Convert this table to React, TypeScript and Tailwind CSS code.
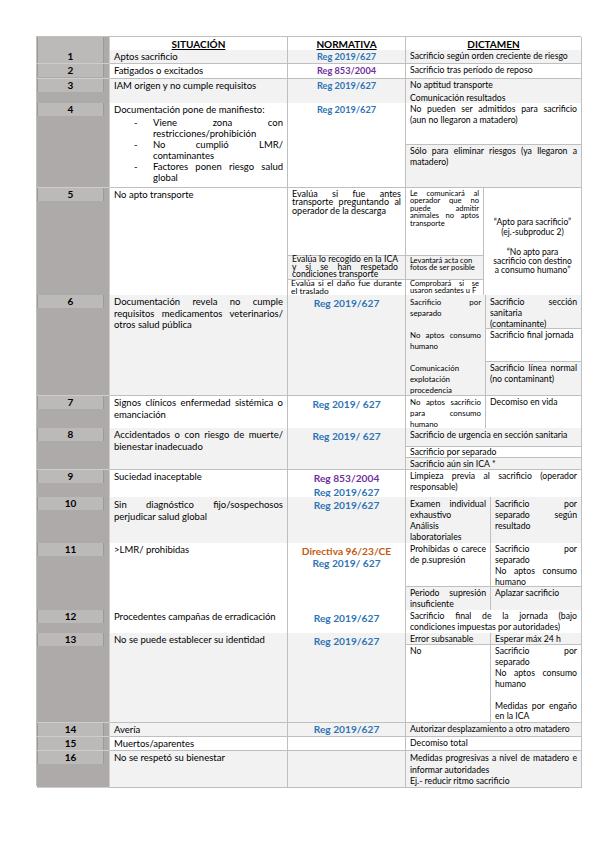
const B = 'border-b border-r border-[#bfbfbf]';
const GRAY = 'bg-[#f2f2f2]';
const WHITE = 'bg-white';
const ROW = 'grid grid-cols-[73px_178px_118px_176px]';
const HEAD = 'pt-[1px] text-center text-[10px] font-bold leading-[12px] underline underline-offset-[1px]';
const SIT = 'px-[4px] pt-[1px] text-[9.5px] leading-[11.5px] text-justify';
const DIC = 'px-[4px] pt-[1px] text-[8.7px] leading-[10.9px] text-justify';
const NARROW = 'px-[4px] pt-[1px] text-[7.9px] leading-[10.8px] text-justify';
const NOR = 'pt-[1px] text-center text-[9.2px] font-bold leading-[11.5px]';
const NOR2 = 'pt-[2px] text-center text-[10.2px] font-bold leading-[12px]';
const SUB = 'px-[3px] text-[8.35px] text-justify';
const TINY = 'px-[4px] text-[7.6px] leading-[7.4px]';
const BLUE = 'text-[#2e74b5]';
const PURPLE = 'text-[#7030a0]';
const ORANGE = 'text-[#c55a11]';
const LINE = 'border-[#bfbfbf]';

function Num({ n }: { n?: string }) {
  return (
    <div className="border-b border-r border-[#cfcccc] bg-[#aeaaaa]">
      <div className="mr-[5px] h-[13px] border-x border-[#9d9999] bg-[#bcb9b9] text-center text-[10px] font-bold leading-[13px]">
        {n}
      </div>
    </div>
  );
}

function Dash({ children }: { children: string }) {
  return (
    <li className="flex">
      <span className="w-[39px] shrink-0 pl-[20px]">-</span>
      <span className="flex-1 text-justify">{children}</span>
    </li>
  );
}

export default function App() {
  return (
    <div className="min-h-[848px] bg-white pl-[36px] pt-[36px] font-['Lato',sans-serif] text-black">
      <div className={`w-[545px] border-l border-t ${LINE}`}>
        {/* header */}
        <div className={`${ROW} h-[13px]`}>
          <Num />
          <div className={`${B} ${WHITE} ${HEAD}`}>SITUACIÓN</div>
          <div className={`${B} ${WHITE} ${HEAD}`}>NORMATIVA</div>
          <div className={`${B} ${WHITE} ${HEAD}`}>DICTAMEN</div>
        </div>

        <div className={`${ROW} h-[14px]`}>
          <Num n="1" />
          <div className={`${B} ${GRAY} ${SIT}`}>Aptos sacrificio</div>
          <div className={`${B} ${GRAY} ${NOR} ${BLUE}`}>Reg 2019/627</div>
          <div className={`${B} ${GRAY} ${DIC}`}>Sacrificio según orden creciente de riesgo</div>
        </div>

        <div className={`${ROW} h-[15px]`}>
          <Num n="2" />
          <div className={`${B} ${WHITE} ${SIT}`}>Fatigados o excitados</div>
          <div className={`${B} ${WHITE} ${NOR} ${PURPLE}`}>Reg 853/2004</div>
          <div className={`${B} ${WHITE} ${DIC}`}>Sacrificio tras período de reposo</div>
        </div>

        <div className={`${ROW} h-[24px]`}>
          <Num n="3" />
          <div className={`${B} ${GRAY} ${SIT}`}>IAM origen y no cumple requisitos</div>
          <div className={`${B} ${GRAY} ${NOR} ${BLUE}`}>Reg 2019/627</div>
          <div className={`${B} ${GRAY} px-[4px] text-[8.7px] leading-[12.5px]`}>
            <p>No aptitud transporte</p>
            <p>Comunicación resultados</p>
          </div>
        </div>

        <div className={`${ROW} h-[85px]`}>
          <Num n="4" />
          <div className={`${B} ${WHITE} px-[4px] pt-[1px] text-[9.5px] leading-[11px]`}>
            <p>Documentación pone de manifiesto:</p>
            <ul className="mt-[2px]">
              <Dash>Viene zona con restricciones/prohibición</Dash>
              <Dash>No cumplió LMR/ contaminantes</Dash>
              <Dash>Factores ponen riesgo salud global</Dash>
            </ul>
          </div>
          <div className={`${B} ${WHITE} ${NOR} ${BLUE}`}>Reg 2019/627</div>
          <div className={`${B} flex flex-col`}>
            <div className={`h-[42px] border-b ${LINE} ${WHITE} ${DIC}`}>
              No pueden ser admitidos para sacrificio (aun no llegaron a matadero)
            </div>
            <div className={`flex-1 ${GRAY} ${DIC}`}>Sólo para eliminar riesgos (ya llegaron a matadero)</div>
          </div>
        </div>

        <div className={`${ROW} h-[107px]`}>
          <Num n="5" />
          <div className={`${B} ${WHITE} ${SIT}`}>No apto transporte</div>
          <div className={`${B} flex flex-col`}>
            <div className={`h-[68px] border-b ${LINE} ${WHITE} px-[4px] pt-[2px] text-[9px] leading-[8.3px] text-justify`}>
              Evalúa si fue antes transporte preguntando al operador de la descarga
            </div>
            <div className={`h-[24px] border-b ${LINE} ${GRAY} pl-[4px] pr-[7px] text-[8.6px] leading-[7.6px] text-justify`}>
              Evalúa lo recogido en la ICA y si se han respetado condiciones transporte
            </div>
            <div className={`flex-1 ${WHITE} ${SUB} leading-[7.6px]`}>Evalúa si el daño fue durante el traslado</div>
          </div>
          <div className={`${B} flex`}>
            <div className={`flex w-[78px] shrink-0 flex-col border-r ${LINE}`}>
              <div className={`h-[68px] border-b ${LINE} ${WHITE} ${TINY} pt-[2px] text-justify`}>
                Le comunicará al operador que no puede admitir animales no aptos transporte
              </div>
              <div className={`h-[24px] border-b ${LINE} ${GRAY} ${TINY} pt-[1px] text-left`}>
                Levantará acta con fotos de ser posible
              </div>
              <div className={`flex-1 ${WHITE} ${TINY} text-justify`}>Comprobará si se usaron sedantes u F</div>
            </div>
            <div className="flex-1 bg-white pt-[29px] text-center text-[8.5px]">
              <p className="leading-[10px]">
                “Apto para sacrificio”
                <br />
                (ej.-subproduc 2)
              </p>
              <p className="mt-[11px] leading-[9px]">
                “No apto para
                <br />
                sacrificio con destino
                <br />a consumo humano”
              </p>
            </div>
          </div>
        </div>

        <div className={`${ROW} h-[101px]`}>
          <Num n="6" />
          <div className={`${B} ${GRAY} ${SIT}`}>
            Documentación revela no cumple requisitos medicamentos veterinarios/ otros salud pública
          </div>
          <div className={`${B} ${GRAY} ${NOR2} ${BLUE}`}>Reg 2019/627</div>
          <div className={`${B} flex`}>
            <div className={`flex w-[80px] shrink-0 flex-col border-r ${LINE} ${GRAY}`}>
              <div className={`h-[34px] ${NARROW} pt-[2px]`}>Sacrificio por separado</div>
              <div className={`h-[33px] ${NARROW}`}>No aptos consumo humano</div>
              <div className={`flex-1 ${NARROW}`}>Comunicación explotación procedencia</div>
            </div>
            <div className="flex flex-1 flex-col">
              <div className={`h-[34px] border-b ${LINE} ${GRAY} ${DIC} pt-[2px]`}>
                Sacrificio sección sanitaria (contaminante)
              </div>
              <div className={`h-[33px] border-b ${LINE} ${WHITE} ${DIC}`}>Sacrificio final jornada</div>
              <div className={`flex-1 ${GRAY} ${DIC}`}>Sacrificio línea normal (no contaminant)</div>
            </div>
          </div>
        </div>

        <div className={`${ROW} h-[32px]`}>
          <Num n="7" />
          <div className={`${B} ${WHITE} ${SIT}`}>Signos clínicos enfermedad sistémica o emanciación</div>
          <div className={`${B} ${WHITE} ${NOR2} ${BLUE}`}>Reg 2019/ 627</div>
          <div className={`${B} ${WHITE} flex`}>
            <div className={`w-[80px] shrink-0 border-r ${LINE} ${NARROW}`}>No aptos sacrificio para consumo humano</div>
            <div className={`flex-1 ${DIC}`}>Decomiso en vida</div>
          </div>
        </div>

        <div className={`${ROW} h-[42px]`}>
          <Num n="8" />
          <div className={`${B} ${GRAY} ${SIT}`}>Accidentados o con riesgo de muerte/ bienestar inadecuado</div>
          <div className={`${B} ${GRAY} ${NOR2} ${BLUE}`}>Reg 2019/ 627</div>
          <div className={`${B} flex flex-col`}>
            <div className={`h-[19px] border-b ${LINE} ${GRAY} ${DIC} pt-[2px]`}>
              Sacrificio de urgencia en sección sanitaria
            </div>
            <div className={`h-[11px] border-b ${LINE} ${WHITE} px-[4px] text-[8.7px] leading-[10px]`}>
              Sacrificio por separado
            </div>
            <div className={`flex-1 ${GRAY} px-[4px] text-[8.7px] leading-[11px]`}>Sacrificio aún sin ICA *</div>
          </div>
        </div>

        <div className={`${ROW} h-[27px]`}>
          <Num n="9" />
          <div className={`${B} ${WHITE} ${SIT}`}>Suciedad inaceptable</div>
          <div className={`${B} ${WHITE} pt-[1px] text-center text-[10.2px] font-bold leading-[14px]`}>
            <p className={PURPLE}>Reg 853/2004</p>
            <p className={BLUE}>Reg 2019/627</p>
          </div>
          <div className={`${B} ${WHITE} ${DIC}`}>Limpieza previa al sacrificio (operador responsable)</div>
        </div>

        <div className={`${ROW} h-[46px]`}>
          <Num n="10" />
          <div className={`${B} ${GRAY} ${SIT} pt-[2px]`}>Sin diagnóstico fijo/sospechosos perjudicar salud global</div>
          <div className={`${B} ${GRAY} ${NOR2} ${BLUE}`}>Reg 2019/627</div>
          <div className={`${B} ${GRAY} flex`}>
            <div className={`w-[85px] shrink-0 border-r ${LINE} ${DIC} pt-[2px]`}>
              <p>Examen individual exhaustivo</p>
              <p>Análisis laboratoriales</p>
            </div>
            <div className={`flex-1 ${DIC} pt-[2px]`}>Sacrificio por separado según resultado</div>
          </div>
        </div>

        <div className={`${ROW} h-[67px]`}>
          <Num n="11" />
          <div className={`${B} ${WHITE} ${SIT}`}>&gt;LMR/ prohibidas</div>
          <div className={`${B} ${WHITE} pt-[2px] text-center text-[10.2px] font-bold leading-[12px]`}>
            <p className={ORANGE}>Directiva 96/23/CE</p>
            <p className={BLUE}>Reg 2019/ 627</p>
          </div>
          <div className={`${B} flex flex-col`}>
            <div className={`flex h-[44px] border-b ${LINE} ${WHITE}`}>
              <div className={`w-[85px] shrink-0 border-r ${LINE} ${DIC}`}>Prohibidas o carece de p.supresión</div>
              <div className={`flex-1 ${DIC} leading-[10.7px]`}>
                <p>Sacrificio por separado</p>
                <p>No aptos consumo humano</p>
              </div>
            </div>
            <div className={`flex flex-1 ${GRAY}`}>
              <div className={`w-[85px] shrink-0 border-r ${LINE} ${DIC}`}>Periodo supresión insuficiente</div>
              <div className={`flex-1 ${DIC}`}>Aplazar sacrificio</div>
            </div>
          </div>
        </div>

        <div className={`${ROW} h-[23px]`}>
          <Num n="12" />
          <div className={`${B} ${WHITE} ${SIT}`}>Procedentes campañas de erradicación</div>
          <div className={`${B} ${WHITE} ${NOR2} pt-[1px] ${BLUE}`}>Reg 2019/627</div>
          <div className={`${B} ${WHITE} ${DIC}`}>
            Sacrificio final de la jornada (bajo condiciones impuestas por autoridades)
          </div>
        </div>

        <div className={`${ROW} h-[90px]`}>
          <Num n="13" />
          <div className={`${B} ${GRAY} ${SIT}`}>No se puede establecer su identidad</div>
          <div className={`${B} ${GRAY} ${NOR2} pt-[1px] ${BLUE}`}>Reg 2019/627</div>
          <div className={`${B} flex flex-col`}>
            <div className={`flex h-[12px] border-b ${LINE} ${GRAY} text-[8.7px] leading-[11px]`}>
              <div className={`w-[85px] shrink-0 border-r ${LINE} px-[4px]`}>Error subsanable</div>
              <div className="flex-1 px-[4px]">Esperar máx 24 h</div>
            </div>
            <div className={`flex flex-1 ${WHITE}`}>
              <div className={`w-[85px] shrink-0 border-r ${LINE} ${DIC}`}>No</div>
              <div className={`flex-1 ${DIC}`}>
                <p>Sacrificio por separado</p>
                <p>No aptos consumo humano</p>
                <p className="mt-[10.9px]">Medidas por engaño en la ICA</p>
              </div>
            </div>
          </div>
        </div>

        <div className={`${ROW} h-[14px]`}>
          <Num n="14" />
          <div className={`${B} ${GRAY} ${SIT}`}>Avería</div>
          <div className={`${B} ${GRAY} pt-0 text-center text-[10.2px] font-bold leading-[12px] ${BLUE}`}>Reg 2019/627</div>
          <div className={`${B} ${GRAY} ${DIC}`}>Autorizar desplazamiento a otro matadero</div>
        </div>

        <div className={`${ROW} h-[14px]`}>
          <Num n="15" />
          <div className={`${B} ${WHITE} ${SIT}`}>Muertos/aparentes</div>
          <div className={`${B} ${WHITE}`} />
          <div className={`${B} ${WHITE} ${DIC}`}>Decomiso total</div>
        </div>

        <div className={`${ROW} h-[35px]`}>
          <Num n="16" />
          <div className={`${B} ${GRAY} ${SIT}`}>No se respetó su bienestar</div>
          <div className={`${B} ${GRAY}`} />
          <div className={`${B} ${GRAY} ${DIC} leading-[11.5px]`}>
            <p>Medidas progresivas a nivel de matadero e informar autoridades</p>
            <p>Ej.- reducir ritmo sacrificio</p>
          </div>
        </div>
      </div>
    </div>
  );
}
